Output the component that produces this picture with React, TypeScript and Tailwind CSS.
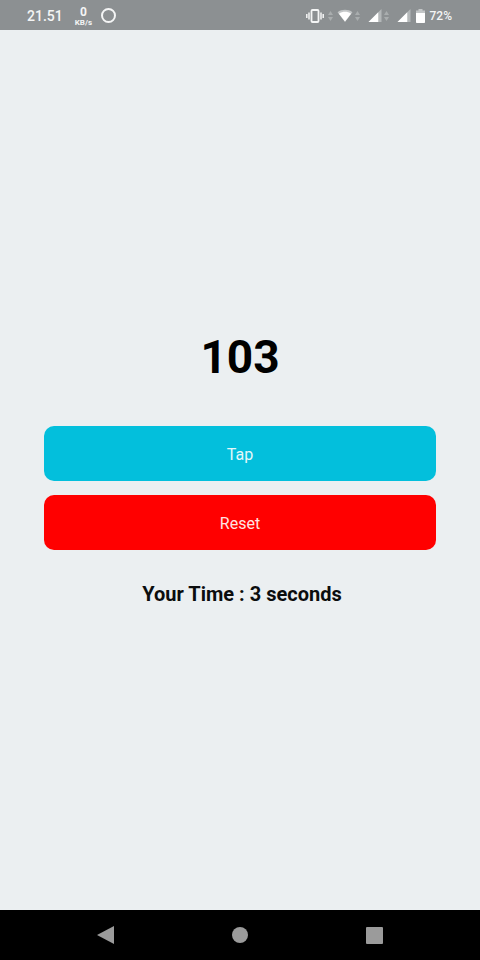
import { useState } from "react";

function VibrateIcon() {
  return (
    <svg width="18" height="14" viewBox="0 0 18 14" fill="none" stroke="#f4f5f5" strokeWidth="1.5" aria-hidden="true">
      <rect x="5.5" y="1" width="7" height="12" rx="1" strokeWidth="1.8" />
      <path d="M3 3.5v7M15 3.5v7M.8 5v4M17.2 5v4" />
    </svg>
  );
}

function DataArrows() {
  return (
    <svg width="5" height="10" viewBox="0 0 5 10" fill="#a9adae" aria-hidden="true">
      <path d="M0 4 2.5 0 5 4zM0 6h5L2.5 10z" />
    </svg>
  );
}

function WifiIcon() {
  return (
    <svg width="16" height="13" viewBox="0 0 16 14" aria-hidden="true">
      <path d="M0 3.500C4.500 0 11.500 0 16 3.500L8 14z" fill="#c3c6c7" />
      <path d="M1.500 5C5.500 2.300 10.500 2.300 14.500 5L8 13.500z" fill="#fff" />
    </svg>
  );
}

function SignalIcon() {
  return (
    <svg width="14" height="13" viewBox="0 0 14 14" aria-hidden="true">
      <path d="M0 14 14 0v14z" fill="#b4b8b9" />
      <path d="M0 14 10.500 3.500V14z" fill="#fff" />
    </svg>
  );
}

function BatteryIcon() {
  return (
    <svg width="9" height="14" viewBox="0 0 9 14" aria-hidden="true">
      <path d="M2.500 0h4v1.500H9V5H0V1.500h2.500z" fill="#c3c6c7" />
      <path d="M0 4h9v9.200q0 .8-.8.8H.8Q0 14 0 13.200z" fill="#fff" />
    </svg>
  );
}

function StatusBar() {
  return (
    <header className="flex h-[30px] items-center justify-between bg-[#8c9092] pt-px pr-7 pl-[27px] text-[#f4f5f5]">
      <div className="flex items-center">
        <span className="text-sm font-medium">21.51</span>
        <span className="ml-3 flex flex-col items-center font-bold">
          <span className="text-xs leading-[14px]">0</span>
          <span className="text-[8px] leading-[8px]">KB/s</span>
        </span>
        <span className="ml-[9px] size-[15px] rounded-full border-2 border-[#f4f5f5]" />
      </div>
      <div className="flex items-center">
        <VibrateIcon />
        <span className="ml-1"><DataArrows /></span>
        <span className="ml-1"><WifiIcon /></span>
        <span className="ml-0.5"><DataArrows /></span>
        <span className="ml-2"><SignalIcon /></span>
        <span className="ml-0.5"><DataArrows /></span>
        <span className="ml-2"><SignalIcon /></span>
        <span className="ml-[5px]"><BatteryIcon /></span>
        <span className="ml-[5px] text-xs font-medium">72%</span>
      </div>
    </header>
  );
}

function NavigationBar() {
  return (
    <nav className="flex h-[50px] items-center justify-between bg-black px-[97px] text-[#9b9b9b]">
      <button type="button" aria-label="Back">
        <svg width="17" height="18" viewBox="0 0 17 18" fill="currentColor"><path d="M0 9 17 0v18z" /></svg>
      </button>
      <button type="button" aria-label="Home">
        <svg width="16" height="16" viewBox="0 0 16 16" fill="currentColor"><circle cx="8" cy="8" r="8" /></svg>
      </button>
      <button type="button" aria-label="Recent apps">
        <svg width="17" height="17" viewBox="0 0 17 17" fill="currentColor"><rect width="17" height="17" rx="1" /></svg>
      </button>
    </nav>
  );
}

export default function App() {
  const [count, setCount] = useState(103);

  return (
    <div className="flex min-h-screen flex-col bg-[#ebeff1] font-['Roboto',sans-serif]">
      <StatusBar />
      <main className="flex flex-1 flex-col justify-center px-11 pb-0.5 text-center">
        <h1 className="mb-[42px] text-[46px] leading-[54px] font-bold text-black">{count}</h1>
        <div className="flex flex-col gap-[14px] text-base text-[#e6f7f9]">
          <button type="button" onClick={() => setCount(count + 1)} className="h-[55px] rounded-[10px] bg-[#03bfdc] pt-0.5">
            Tap
          </button>
          <button type="button" onClick={() => setCount(0)} className="h-[55px] rounded-[10px] bg-[#ff0000] pt-0.5 text-[#ffe4e2]">
            Reset
          </button>
        </div>
        <p className="mt-[30px] pl-1 text-xl leading-7 font-bold text-[#0b0d0e]">Your Time : 3 seconds</p>
      </main>
      <NavigationBar />
    </div>
  );
}
